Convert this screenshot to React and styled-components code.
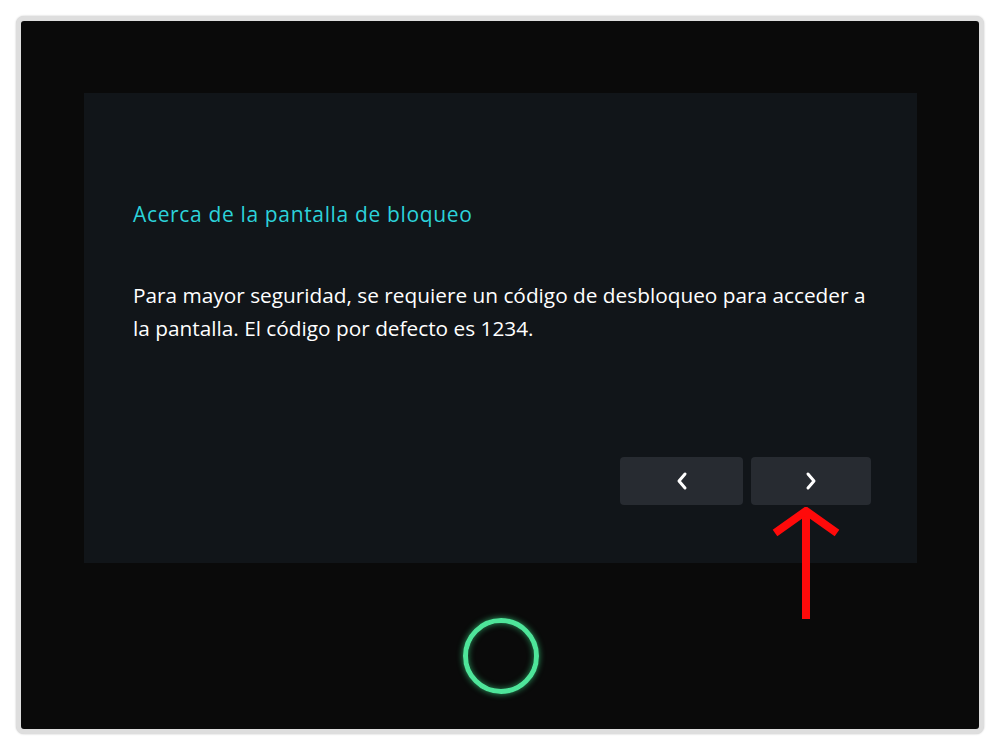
import React from "react";
import styled, { createGlobalStyle } from "styled-components";

const GlobalStyle = createGlobalStyle`
  html, body {
    margin: 0;
    padding: 0;
    background: #ffffff;
  }
  body {
    font-family: "Open Sans", "Liberation Sans", sans-serif;
  }
`;

const Page = styled.div`
  width: 1000px;
  height: 750px;
  padding: 16px;
  box-sizing: border-box;
`;

const Device = styled.div`
  width: 100%;
  height: 100%;
  box-sizing: border-box;
  border: 5px solid #dedede;
  border-radius: 8px;
  background: #0a0a0a;
  box-shadow: 0 0 2px rgba(0, 0, 0, 0.25);
  display: flex;
  flex-direction: column;
  padding: 72px 62px 0 63px;
`;

const Screen = styled.div`
  height: 470px;
  background: #111519;
  padding: 106px 46px 0 49px;
  box-sizing: border-box;
  display: flex;
  flex-direction: column;
`;

const Title = styled.h2`
  margin: 0;
  color: #2cd2da;
  font-size: 21px;
  font-weight: 500;
  line-height: 30px;
  letter-spacing: 0.65px;
`;

const Body = styled.p`
  margin: 50px 0 0;
  color: #ffffff;
  font-size: 20.8px;
  font-weight: 500;
  line-height: 33px;
`;

const Nav = styled.div`
  display: flex;
  justify-content: flex-end;
  gap: 8px;
  margin-top: auto;
  margin-bottom: 58px;
  position: relative;
`;

const NavButton = styled.button`
  width: ${(p) => p.w}px;
  height: 48px;
  border: none;
  border-radius: 4px;
  background: #272b31;
  display: flex;
  align-items: center;
  justify-content: center;
  padding: 0;
`;

const Arrow = styled.svg`
  position: absolute;
  right: 30px;
  top: 50px;
`;

const Bottom = styled.div`
  flex: 1;
  display: flex;
  align-items: center;
  justify-content: center;
`;

const Ring = styled.div`
  width: 66px;
  height: 66px;
  border-radius: 50%;
  border: 5px solid #4ee59a;
  box-shadow: 0 0 6px rgba(60, 230, 140, 0.7), inset 0 0 6px rgba(60, 230, 140, 0.6);
  margin-top: 20px;
`;

const Chevron = ({ dir }) => (
  <svg width="14" height="20" viewBox="0 0 14 20">
    <path
      d={dir === "left" ? "M10 3 L4 10 L10 17" : "M4 3 L10 10 L4 17"}
      fill="none"
      stroke="#ffffff"
      strokeWidth="3"
      strokeLinecap="round"
      strokeLinejoin="round"
    />
  </svg>
);

export default function App() {
  return (
    <Page>
      <GlobalStyle />
      <Device>
        <Screen>
          <Title>Acerca de la pantalla de bloqueo</Title>
          <Body>
            Para mayor seguridad, se requiere un código de desbloqueo para acceder a la
            pantalla. El código por defecto es 1234.
          </Body>
          <Nav>
            <NavButton w={123}>
              <Chevron dir="left" />
            </NavButton>
            <NavButton w={120}>
              <Chevron dir="right" />
            </NavButton>
            <Arrow width="70" height="114" viewBox="0 0 70 114">
              <path d="M35 4 L35 112" stroke="#ff0a0a" strokeWidth="8" fill="none" />
              <path d="M4 26 L35 4 L66 26" stroke="#ff0a0a" strokeWidth="8" fill="none" strokeLinejoin="miter" />
            </Arrow>
          </Nav>
        </Screen>
        <Bottom>
          <Ring />
        </Bottom>
      </Device>
    </Page>
  );
}
